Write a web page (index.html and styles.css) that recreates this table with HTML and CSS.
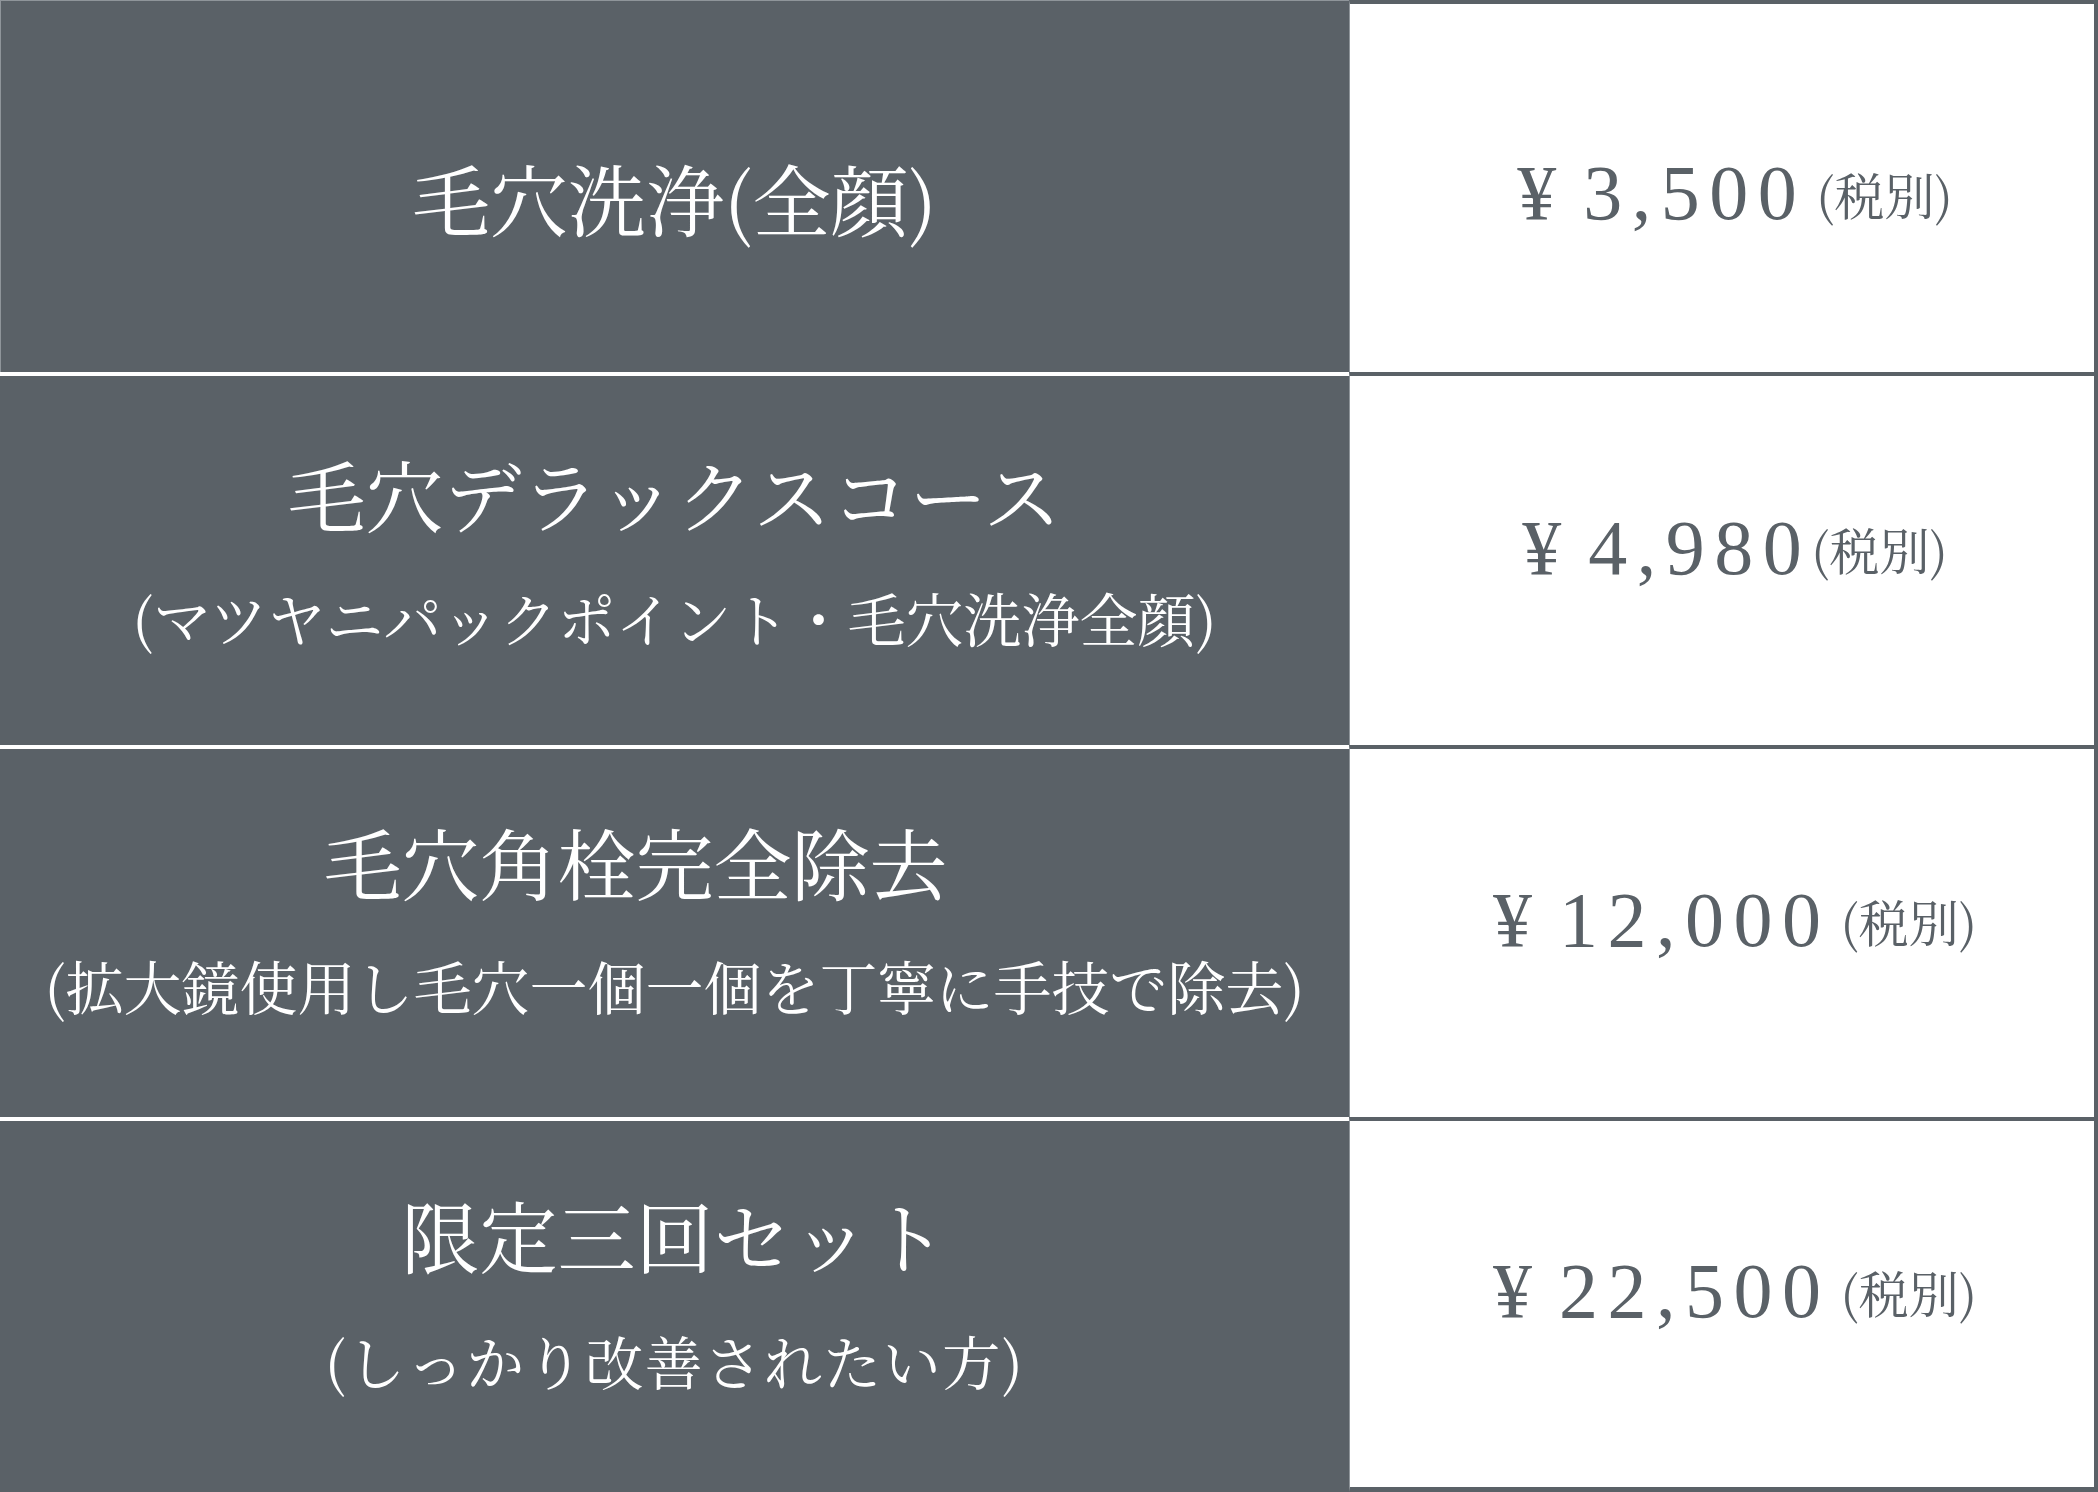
FILE: index.html
```html
<!DOCTYPE html>
<html lang="ja">
<head>
<meta charset="utf-8">
<title>毛穴メニュー</title>
<link rel="stylesheet" href="styles.css">
</head>
<body>
<div class="menu">
  <div class="name first">
    <div class="title">毛穴洗浄(全顔)</div>
  </div>
  <div class="price first"><span class="yen">¥</span><span class="num">3,500</span><span class="tax sp">(税別)</span></div>

  <div class="name">
    <div class="title">毛穴デラックスコース</div>
    <div class="sub">(マツヤニパックポイント・毛穴洗浄全顔)</div>
  </div>
  <div class="price"><span class="yen">¥</span><span class="num">4,980</span><span class="tax">(税別)</span></div>

  <div class="name lower">
    <div class="title">毛穴角栓完全除去　</div>
    <div class="sub">(拡大鏡使用し毛穴一個一個を丁寧に手技で除去)</div>
  </div>
  <div class="price"><span class="yen">¥</span><span class="num">12,000</span><span class="tax sp">(税別)</span></div>

  <div class="name lower last">
    <div class="title">限定三回セット</div>
    <div class="sub sub-wide">(しっかり改善されたい方)</div>
  </div>
  <div class="price last"><span class="yen">¥</span><span class="num">22,500</span><span class="tax sp">(税別)</span></div>
</div>
</body>
</html>
```

FILE: styles.css
```css
html, body {
  margin: 0;
  padding: 0;
  background: #ffffff;
}

.menu {
  width: 2098px;
  height: 1492px;
  display: grid;
  grid-template-columns: 1349px 1fr;
  grid-template-rows: 372px 373px 372px 375px;
  font-family: "Noto Serif CJK JP", "Noto Serif JP", "Liberation Serif", "Noto Sans CJK JP", serif;
}

.name {
  box-sizing: border-box;
  background: #5a6167;
  color: #ffffff;
  border-top: 4px solid #ffffff;
  display: flex;
  flex-direction: column;
  align-items: center;
  justify-content: center;
  text-align: center;
  padding-bottom: 21px;
}

.name.lower {
  padding-bottom: 30px;
}

.name.first {
  border-top: none;
  box-shadow: inset 1px 1px 0 #8f959a;
  padding-top: 22px;
  padding-bottom: 0;
}

.title {
  font-size: 78px;
  line-height: 1;
  white-space: pre;
}

.sub {
  font-size: 58px;
  line-height: 1;
  margin-top: 56px;
  white-space: nowrap;
}

.sub-wide {
  letter-spacing: 1.5px;
  margin-top: 58px;
}

.price {
  box-sizing: border-box;
  background: #ffffff;
  color: #5a6167;
  border-top: 4px solid #5a6167;
  border-right: 4px solid #5a6167;
  border-left: 1px solid #8f959a;
  display: flex;
  align-items: center;
  justify-content: center;
  padding-left: 26px;
  padding-bottom: 26px;
  white-space: nowrap;
}

.price.first {
  padding-bottom: 0;
  padding-top: 10px;
}

.price.last {
  border-bottom: 5px solid #5a6167;
}

.yen {
  font-family: "Liberation Serif", serif;
  font-size: 78px;
  margin-right: 27px;
}

.num {
  font-family: "Liberation Serif", serif;
  font-size: 78px;
  letter-spacing: 9.5px;
}

.tax {
  font-size: 50px;
}

.tax.sp {
  margin-left: 10px;
}
```
